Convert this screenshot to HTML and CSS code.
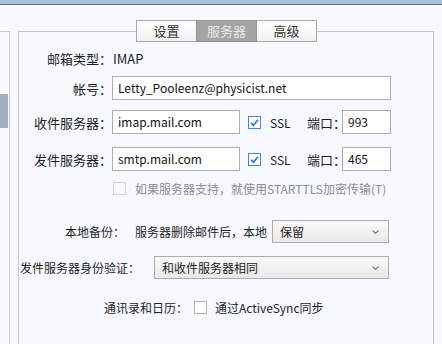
FILE: index.html
```html
<!DOCTYPE html>
<html lang="zh-CN">
<head>
<meta charset="utf-8">
<link rel="stylesheet" href="styles.css">
</head>
<body>
<div class="topbar"></div>
<div class="content">
  <div class="sidepanel"><div class="side-sel"></div></div>
  <div class="panel">
    <div class="tabs">
      <div class="tab">设置</div>
      <div class="tab active">服务器</div>
      <div class="tab">高级</div>
    </div>
    <div class="row r-type">
      <div class="label">邮箱类型：</div>
      <div class="value">IMAP</div>
    </div>
    <div class="row r-acct">
      <div class="label">帐号：</div>
      <div class="input wide">Letty_Pooleenz@physicist.net</div>
    </div>
    <div class="row r-in">
      <div class="label">收件服务器：</div>
      <div class="input host">imap.mail.com</div>
      <span class="check checked"><svg viewBox="0 0 13 13" width="13" height="13"><path d="M3 6.8 L5.4 9.2 L10 3.8" fill="none" stroke="#2d6cc0" stroke-width="1.6"/></svg></span>
      <span class="ssl">SSL</span>
      <span class="port-label">端口：</span>
      <div class="input port">993</div>
    </div>
    <div class="row r-out">
      <div class="label">发件服务器：</div>
      <div class="input host">smtp.mail.com</div>
      <span class="check checked"><svg viewBox="0 0 13 13" width="13" height="13"><path d="M3 6.8 L5.4 9.2 L10 3.8" fill="none" stroke="#2d6cc0" stroke-width="1.6"/></svg></span>
      <span class="ssl">SSL</span>
      <span class="port-label">端口：</span>
      <div class="input port">465</div>
    </div>
    <div class="row r-tls">
      <span class="check disabled"></span>
      <span class="tls-text">如果服务器支持，就使用STARTTLS加密传输(T)</span>
    </div>
    <div class="row r-backup">
      <span class="backup-label">本地备份：</span>
      <span class="backup-text">服务器删除邮件后，本地</span>
      <div class="select keep">保留<svg class="chev" viewBox="0 0 7 4" width="7" height="4"><path d="M0.5 0.5 L3.5 3.5 L6.5 0.5" fill="none" stroke="#7a7a7a" stroke-width="1.1"/></svg></div>
    </div>
    <div class="row r-auth">
      <span class="auth-label">发件服务器身份验证：</span>
      <div class="select auth">和收件服务器相同<svg class="chev" viewBox="0 0 7 4" width="7" height="4"><path d="M0.5 0.5 L3.5 3.5 L6.5 0.5" fill="none" stroke="#7a7a7a" stroke-width="1.1"/></svg></div>
    </div>
    <div class="row r-sync">
      <span class="sync-label">通讯录和日历：</span>
      <span class="check"></span>
      <span class="sync-text">通过ActiveSync同步</span>
    </div>
  </div>
</div>
</body>
</html>
```

FILE: styles.css
```css
html, body {
  margin: 0;
  padding: 0;
  height: 100%;
  overflow: hidden;
}
body {
  background: #f7f9fe;
  font-family: "Noto Sans CJK SC", "Noto Sans", sans-serif;
  font-size: 13px;
  color: #1e1e1e;
}
.topbar {
  height: 4px;
  background: #aac1d9;
  border-bottom: 1px solid #5d7088;
}
.content {
  display: flex;
  box-sizing: border-box;
  padding-top: 26px;
  height: 339px;
}
.sidepanel {
  width: 9px;
  border-top: 1px solid #c9c9cc;
  border-right: 1px solid #c9c9cc;
}
.side-sel {
  margin-top: 62px;
  height: 34px;
  width: 8px;
  background: #a2b0c1;
}
.panel {
  margin-left: 8px;
  width: 414px;
  border: 1px solid #c6c6c8;
  border-bottom: none;
  display: flex;
  flex-direction: column;
}
.tabs {
  display: flex;
  margin-top: -12px;
  margin-left: 118px;
  align-self: flex-start;
}
.tab {
  width: 59px;
  height: 20px;
  line-height: 20px;
  text-align: center;
  border: 1px solid #a8a8a8;
  margin-left: -1px;
  background: linear-gradient(#ffffff, #f1f1f1);
  color: #333;
  font-size: 13px;
}
.tab.active {
  background: #a4a4a4;
  color: #e9e9e9;
  border-color: #939393;
  position: relative;
}
.row {
  display: flex;
  align-items: center;
  white-space: nowrap;
  height: 24px;
  flex: none;
}
.label {
  width: 93px;
  text-align: right;
}
.value {
  padding-left: 1px;
}
.r-type { margin-top: 4px; }
.r-acct { margin-top: 6px; }
.r-in { margin-top: 10px; }
.r-out { margin-top: 13px; }
.r-tls { margin-top: 5px; padding-left: 94px; font-size: 12px; }
.r-backup { margin-top: 20px; height: 23px; font-size: 12px; }
.r-auth { margin-top: 13px; height: 23px; font-size: 12px; }
.r-sync { margin-top: 16px; font-size: 12px; }
.input {
  box-sizing: border-box;
  height: 24px;
  line-height: 22px;
  border: 1px solid #abadb3;
  background: #ffffff;
  padding-left: 5px;
  color: #111;
  font-size: 12px;
}
.input.wide { width: 279px; }
.input.host { width: 128px; }
.input.port { width: 49px; }
.check {
  box-sizing: border-box;
  width: 13px;
  height: 13px;
  border: 1px solid #b3b3b3;
  background: #ffffff;
  display: inline-flex;
  flex: none;
}
.check svg { margin: -1px; }
.check.checked {
  border-color: #4a86cf;
  margin-left: 8px;
}
.check.disabled {
  border-color: #d2d2d2;
  background: #f7f9fe;
}
.ssl { margin-left: 9px; font-size: 12px; width: 37px; }
.port-label { width: 35px; }
.tls-text {
  margin-left: 9px;
  color: #8e8e8e;
}
.backup-label {
  margin-left: 46px;
}
.backup-text { margin-left: 10px; }
.select {
  box-sizing: border-box;
  height: 23px;
  line-height: 21px;
  border: 1px solid #acacac;
  background: linear-gradient(#f9f9f9, #e9e9e9);
  padding-left: 7px;
  position: relative;
}
.select .chev {
  position: absolute;
  right: 9px;
  top: 9px;
}
.select.keep { width: 117px; margin-left: 5px; }
.auth-label { margin-left: 1px; }
.select.auth { width: 235px; margin-left: 14px; }
.sync-label {
  margin-left: 85px;
}
.r-sync .check { margin-left: 6px; }
.sync-text { margin-left: 8px; }
```
